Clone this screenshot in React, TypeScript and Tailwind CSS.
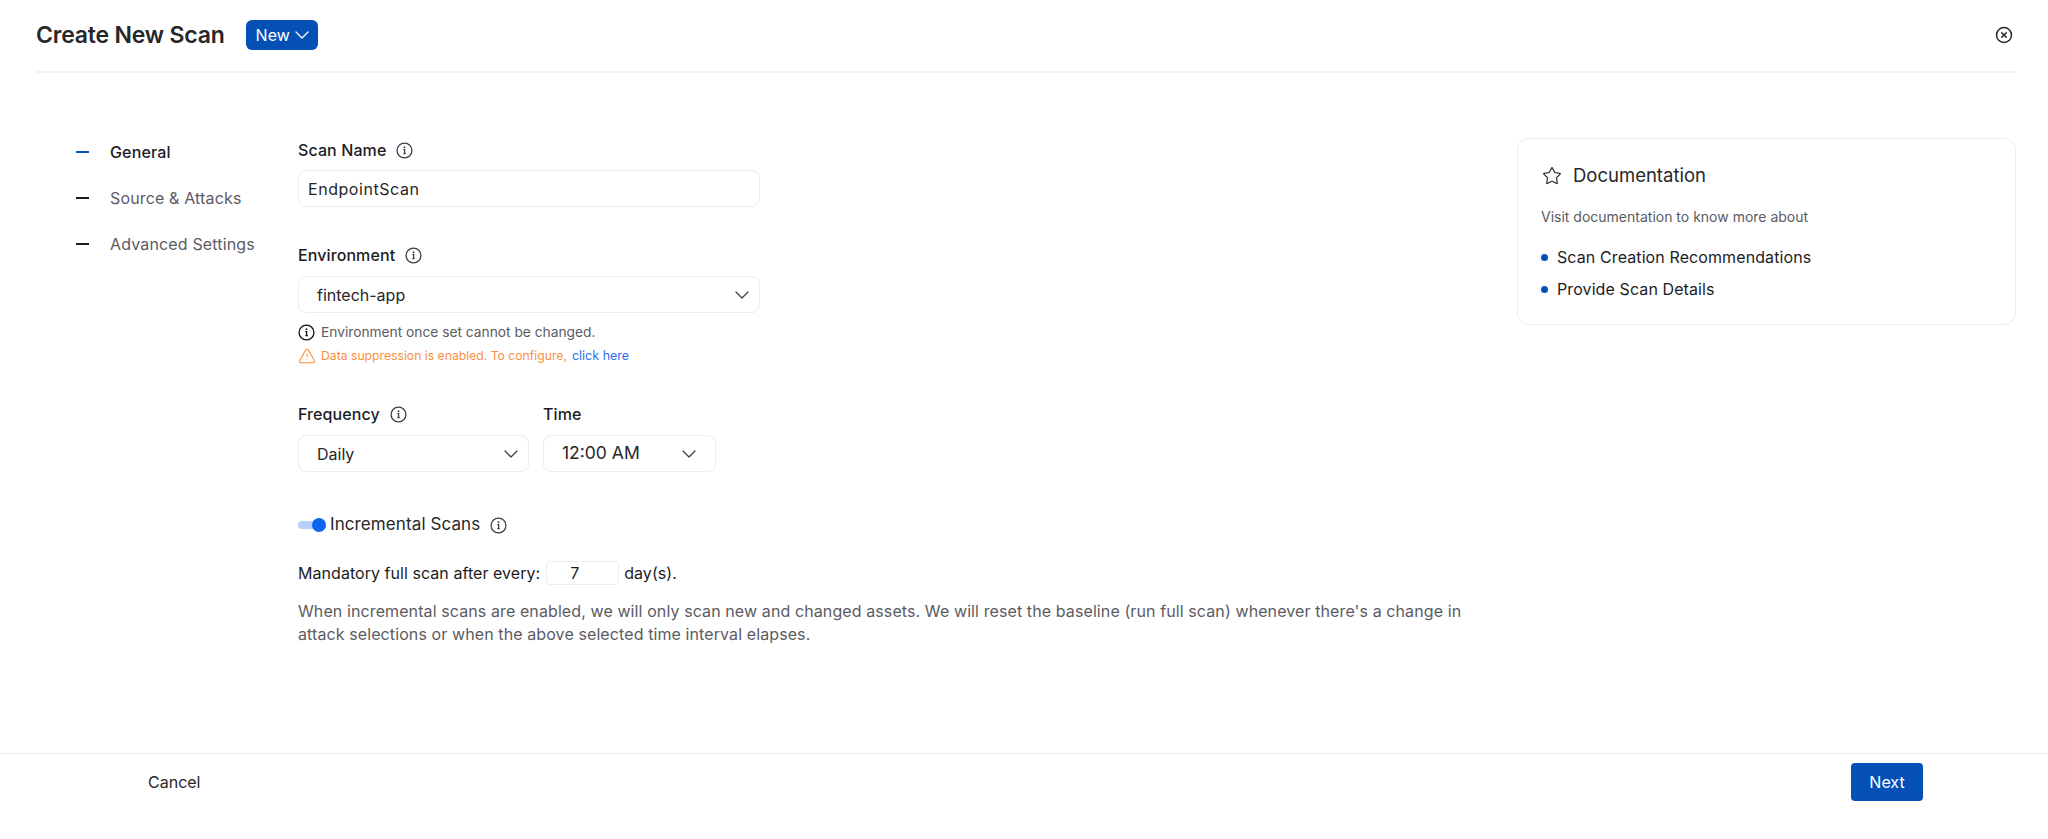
import { ChevronDown, CircleX, Star, TriangleAlert } from 'lucide-react'

function InfoIcon({ className }: { className: string }) {
  return (
    <svg viewBox="0 0 16 16" fill="none" stroke="currentColor" className={className}>
      <circle cx="8" cy="8" r="7" strokeWidth="1.2" />
      <path d="M6.9 7.2H8.1V11M6.9 11H9.2" strokeWidth="1.2" />
      <circle cx="8" cy="5" r="0.9" fill="currentColor" stroke="none" />
    </svg>
  )
}

function Select({ label, className }: { label: string; className: string }) {
  return (
    <div className={`flex h-[37px] items-center justify-between rounded-lg border border-[#ececee] bg-white pl-[18px] text-base text-[#27272a] ${className}`}>
      <span>{label}</span>
      <ChevronDown className="h-6 w-6 text-[#3f3f46]" strokeWidth={1.25} />
    </div>
  )
}

const steps = [
  { label: 'General', active: true },
  { label: 'Source & Attacks', active: false },
  { label: 'Advanced Settings', active: false },
]

export default function App() {
  return (
    <div className="flex h-[839px] flex-col bg-white font-['Inter',sans-serif] text-[#1c1c1f]">
      {/* Header */}
      <div className="mx-[36px] mr-[32px] flex h-[73px] shrink-0 items-center justify-between border-b-2 border-[#f0f1f3] pb-[2px]">
        <div className="flex items-center gap-[21px]">
          <h1 className="text-[23px] leading-8 font-semibold tracking-[-0.2px] text-[#27272a]">Create New Scan</h1>
          <button className="flex h-[30px] w-[72px] items-center rounded-md bg-[#0550b5] pl-[10px] text-base text-white">
            New
            <ChevronDown className="h-6 w-6" strokeWidth={1.25} />
          </button>
        </div>
        <CircleX className="mr-[3px] h-[18px] w-[18px] text-[#27272a]" strokeWidth={2} />
      </div>

      {/* Body */}
      <div className="flex flex-1 pt-[65px]">
        <nav className="flex w-[298px] shrink-0 flex-col gap-[22px] pt-[2px] pl-[76px]">
          {steps.map(step => (
            <div key={step.label} className="flex h-6 items-center gap-[21px]">
              <span className={`h-[2px] w-[13px] ${step.active ? 'bg-[#0550b5]' : 'bg-[#1c1c1f]'}`} />
              <span className={`text-base tracking-[0.15px] ${step.active ? 'font-medium text-[#1c1c1f]' : 'text-[#5b5b63]'}`}>{step.label}</span>
            </div>
          ))}
        </nav>

        <div className="w-[1219px] shrink-0">
          <div className="flex h-6 items-center gap-[10px] text-base font-medium tracking-[0.1px]">
            Scan Name
            <InfoIcon className="h-[17px] w-[17px] text-[#3f3f46]" />
          </div>
          <div className="mt-[8px] flex h-[37px] w-[462px] items-center rounded-lg border border-[#ececee] pl-[9px] text-base tracking-[0.55px] text-[#27272a]">
            EndpointScan
          </div>

          <div className="mt-[36px] flex h-6 items-center gap-[10px] text-base font-medium tracking-[0.1px]">
            Environment
            <InfoIcon className="h-[17px] w-[17px] text-[#3f3f46]" />
          </div>
          <Select label="fintech-app" className="mt-[9px] w-[462px] pr-[5px]" />
          <div className="mt-[9px] flex h-[20px] items-center gap-[6px] text-[13.75px] text-[#5b5b63]">
            <InfoIcon className="h-[17px] w-[17px] text-[#111113]" />
            Environment once set cannot be changed.
          </div>
          <div className="mt-[4px] flex h-[20px] items-center gap-[5px] text-[12.2px] text-[#f98f3e]">
            <TriangleAlert className="h-[18px] w-[18px]" strokeWidth={1.5} />
            <span>Data suppression is enabled. To configure,</span>
            <span className="text-[12.5px] text-[#2f6fed]">click here</span>
          </div>

          <div className="mt-[36px] flex gap-[14px]">
            <div>
              <div className="flex h-6 items-center gap-[10px] text-base font-medium tracking-[0.1px]">
                Frequency
                <InfoIcon className="h-[17px] w-[17px] text-[#3f3f46]" />
              </div>
              <Select label="Daily" className="mt-[9px] w-[231px] pr-[5px]" />
            </div>
            <div>
              <div className="flex h-6 items-center text-base font-medium tracking-[0.1px]">Time</div>
              <Select label="12:00 AM" className="mt-[9px] w-[173px] pr-[14px] text-[17.5px]" />
            </div>
          </div>

          <div className="mt-[41px] flex h-6 items-center">
            <span className="relative h-[8px] w-[28px] rounded-full bg-[#b9d0fb]">
              <span className="absolute top-[-3px] right-0 h-[14px] w-[14px] rounded-full bg-[#0d66f2]" />
            </span>
            <span className="ml-[4px] text-[17px] tracking-[0.1px] text-[#27272a]">Incremental Scans</span>
            <InfoIcon className="ml-[10px] h-[17px] w-[17px] text-[#3f3f46]" />
          </div>

          <div className="mt-[24px] flex h-6 items-center text-base tracking-[0.05px]">
            Mandatory full scan after every:
            <span className="mr-[5px] ml-[6px] flex h-6 w-[73px] items-center rounded border border-[#ececee] pl-[23px]">7</span>
            day(s).
          </div>

          <p className="mt-[15px] w-[1180px] text-base leading-[23px] tracking-[0.1px] text-[#5b5b63]">
            When incremental scans are enabled, we will only scan new and changed assets. We will reset the baseline (run full scan) whenever there's a change in attack selections or when the above selected time interval elapses.
          </p>
        </div>

        {/* Documentation card */}
        <div className="h-[187px] w-[499px] shrink-0 self-start rounded-xl border border-[#ececee] pt-[25px] pr-[23px] pl-[24px]">
          <div className="flex h-6 items-center gap-[11px] text-[18.5px] text-[#27272a]">
            <Star className="h-[20px] w-[20px]" strokeWidth={1.4} />
            Documentation
          </div>
          <p className="mt-[19px] -ml-px text-sm text-[#5b5b63]">Visit documentation to know more about</p>
          <ul className="mt-[18px] -ml-px flex flex-col gap-[8px] text-base tracking-[0.1px]">
            {['Scan Creation Recommendations', 'Provide Scan Details'].map(item => (
              <li key={item} className="flex h-6 items-center gap-[9px]">
                <span className="h-[7px] w-[7px] rounded-full bg-[#0550b5]" />
                {item}
              </li>
            ))}
          </ul>
        </div>
      </div>

      {/* Footer */}
      <div className="flex h-[86px] shrink-0 items-start justify-between border-t border-[#ececee] pt-[9px] pr-[125px] pl-[148px]">
        <button className="mt-[7px] h-6 text-base text-[#27272a]">Cancel</button>
        <button className="h-[38px] w-[72px] rounded bg-[#0550b5] text-base text-white">Next</button>
      </div>
    </div>
  )
}
